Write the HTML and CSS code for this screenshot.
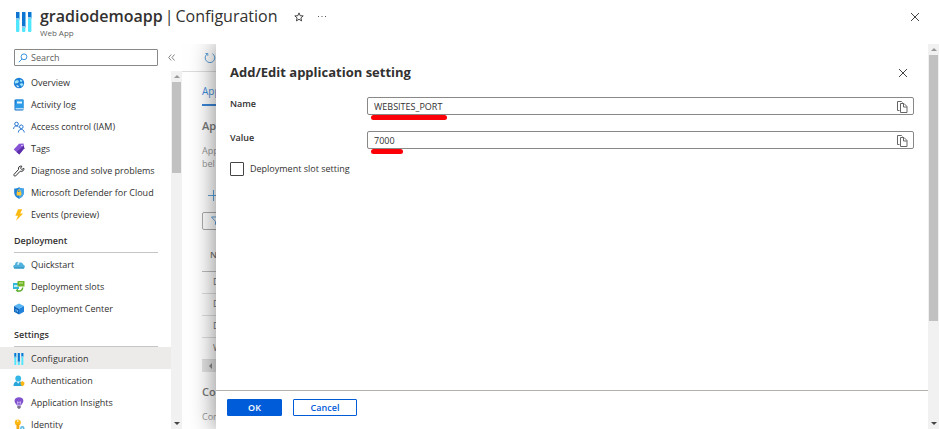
FILE: index.html
```html
<!DOCTYPE html>
<html lang="en">
<head>
<meta charset="utf-8">
<title>gradiodemoapp | Configuration</title>
<link rel="stylesheet" href="styles.css">
</head>
<body>
<svg class="defs" aria-hidden="true">
  <symbol id="bars" viewBox="0 0 16 20">
    <rect x="0" y="0" width="3.400" height="20" rx="1" fill="#50e6ff"/><rect x="6" y="0" width="3.400" height="20" rx="1" fill="#50e6ff"/><rect x="12" y="0" width="3.400" height="20" rx="1" fill="#50e6ff"/>
    <path d="M0 0h3.400v7H0zM6 0h3.400v15H6zM12 0h3.400v6h-3.400z" fill="#0f74d1"/>
    <path d="M0 6h3.400v2H0zM6 14h3.400v2H6zM12 5h3.400v2h-3.400z" fill="#86c9ef"/>
  </symbol>
  <symbol id="close" viewBox="0 0 10 10"><path d="M1 1l8 8M9 1L1 9" fill="none" stroke="#444" stroke-width="1"/></symbol>
  <symbol id="copy" viewBox="0 0 12 12"><path d="M3.500 9.500H1.500V.5h4l1 1M4.500 2.500h3.500l3 3v6H4.500zM7.500 2.500v3.500H11" fill="none" stroke="#666" stroke-width="1"/></symbol>
</svg>

<header class="top">
  <svg class="logo"><use href="#bars"/></svg>
  <div class="heading">
    <h1><b>gradiodemoapp</b> <span>|</span> <span>Configuration</span></h1>
    <p>Web App</p>
  </div>
  <button class="icon-btn star" aria-label="Favorite"><svg width="10" height="10" viewBox="0 0 10 10"><path d="M5 .9l1.200 2.800 3 .2-2.300 2 .7 3L5 7.300 2.400 8.900l.7-3-2.300-2 3-.2z" fill="none" stroke="#444"/></svg></button>
  <button class="icon-btn more" aria-label="More"><svg width="10" height="4" viewBox="0 0 10 4"><path d="M1 1.500h1M4.500 1.500h1M8 1.500h1" stroke="#555"/></svg></button>
  <button class="icon-btn exit" aria-label="Close"><svg width="10" height="10"><use href="#close"/></svg></button>
</header>

<div class="shell">
  <aside class="side">
    <div class="search-row">
      <label class="search"><svg width="10" height="10" viewBox="0 0 10 10"><circle cx="6" cy="3.800" r="2.900" fill="none" stroke="#3b93dc"/><path d="M4 6L.8 9.200" stroke="#3b93dc"/></svg><input type="text" placeholder="Search" aria-label="Search"></label>
      <button class="icon-btn" aria-label="Collapse"><svg width="7" height="7" viewBox="0 0 7 7"><path d="M3.200.5l-2.500 3 2.500 3M6.500.5l-2.500 3 2.500 3" fill="none" stroke="#666" stroke-width=".8"/></svg></button>
    </div>
    <div class="menu-area">
      <nav class="menu">
        <a href="#"><svg viewBox="0 0 12 12"><circle cx="6" cy="6" r="5.200" fill="#1b80d8"/><path d="M1.500 4.500L4 3l2 1-1 2-3 .5zM7 2.500l2.500 1L8.500 5 7 4.500zM6.500 7L9 6l1.500 1.500L8.500 9.500z" fill="#9fe3f7"/><path d="M3 8l3 1-1 1.500z" fill="#fff"/></svg>Overview</a>
        <a href="#"><svg viewBox="0 0 12 12"><rect x="1.500" y=".5" width="9" height="11" rx="1" fill="#1673c9"/><path d="M3 .5h7.500v8.500H2z" fill="#2d9be8"/><path d="M4 2.500h5v2H4z" fill="#e8f6fd"/><path d="M2.500 9h8v1.500h-8z" fill="#b7dcf5"/></svg>Activity log</a>
        <a href="#"><svg viewBox="0 0 12 12" fill="none" stroke="#2877d1"><circle cx="3.500" cy="3" r="1.800"/><path d="M.6 8c.1-3 3-4 5-2"/><circle cx="8.300" cy="5.800" r="1.800"/><path d="M5.300 11.500c.2-4.200 5.700-4.200 6 0"/></svg>Access control (IAM)</a>
        <a href="#"><svg viewBox="0 0 12 12"><path d="M6 .8L10.500.5l.8 4.800-5 6.200L.7 6.600z" fill="#8653d6"/><path d="M6.300 11.500l5-6.200-.5-2.500L3.500 9z" fill="#5b2fa8"/><circle cx="9" cy="2.500" r=".7" fill="#fff"/></svg>Tags</a>
        <a href="#"><svg viewBox="0 0 12 12"><path d="M10.800 3.300L8.900 4.500 7.500 3.300 8.900 1.200C6.500.5 4.900 2.400 5.500 4.500L1 9.400c-.7 1 .7 2.300 1.700 1.500L7.200 6.200C9.500 7 11.500 5.200 10.800 3.300z" fill="none" stroke="#333"/></svg>Diagnose and solve problems</a>
        <a href="#"><svg viewBox="0 0 12 12"><path d="M6 .3c1.500 1 3 1.300 4.800 1.300v4.200c0 3-2.300 4.900-4.800 6C3.500 10.700 1.200 8.800 1.200 5.800V1.600C3 1.600 4.500 1.300 6 .3z" fill="#1f83d8"/><path d="M6 11.800c2.500-1.100 4.800-3 4.800-6V1.600C9 1.600 7.500 1.300 6 .3z" fill="#43a5ec"/><rect x="3.700" y="4.900" width="4.600" height="3.700" rx=".6" fill="#ffca35"/><path d="M4.700 5V3.900c0-1.700 2.600-1.700 2.600 0V5" fill="none" stroke="#ffca35" stroke-width=".9"/></svg>Microsoft Defender for Cloud</a>
        <a href="#"><svg viewBox="0 0 12 12"><path d="M5 .3h4.300L7.200 4.400h3L3 11.800l2-5H2.300z" fill="#fbbb13"/></svg>Events (preview)</a>
        <h2>Deployment</h2>
        <a href="#"><svg viewBox="0 0 12 12"><path d="M2.500 9.500C-.5 9.500-.3 5.800 2 5.700c0-3 3.200-3.800 4.600-1.900C9.300 3 10 5 10 5.600c2.500.4 2.300 3.900 0 3.900z" fill="#4fb1dc"/><path d="M5 2.500L6.500 4.500H5.600v1.500H4.600V4.500z" fill="#fff"/><path d="M1 8.500h10v1H1z" fill="#278bbd"/></svg>Quickstart</a>
        <a href="#"><svg viewBox="0 0 12 12"><rect x="0" y="2" width="6" height="6" fill="#32b6da"/><path d="M1 4h5v2H1z" fill="#b6edf6"/><rect x="4.500" y="0" width="7" height="5.500" fill="#72b626"/><path d="M6 2h4" stroke="#d0eea8"/><path d="M9.800 6.500C9.500 9.500 7 11 4 9.500" fill="none" stroke="#60ad30" stroke-width="1.500"/><path d="M4.800 7.600L2.600 9.500l2.700 1.800z" fill="#60ad30"/></svg>Deployment slots</a>
        <a href="#"><svg viewBox="0 0 12 12"><path d="M6 .5l5 2.500-5 2.800L1 3z" fill="#58b5f3"/><path d="M1 3l5 2.800v5.700L1 8.800z" fill="#1268bd"/><path d="M11 3L6 5.800v5.700l5-2.700z" fill="#2182dc"/><path d="M3 6v2.500M4.500 7v2" stroke="#8fd0fa" stroke-width=".7"/></svg>Deployment Center</a>
        <h2>Settings</h2>
        <a href="#" class="active" aria-current="page"><svg viewBox="0 0 16 20"><use href="#bars" width="16" height="20"/></svg>Configuration</a>
        <a href="#"><svg viewBox="0 0 12 12"><path d="M.5 11c0-3.500 2-4.800 4.700-4.800S10 7.500 10 11z" fill="#28a6d9"/><path d="M3.500 6.200h3.400L5.200 8.800z" fill="#e8f9ff"/><circle cx="5.200" cy="3.400" r="2.900" fill="#32b7e6"/><path d="M9.300 6l2.200 1.500L11.200 10l-2 1.300L7.800 10 7.500 7.500z" fill="#fdb714"/></svg>Authentication</a>
        <a href="#"><svg viewBox="0 0 12 12"><path d="M6 .3c5 0 5.300 4.700 3 6.600L8 8.500H4L3 6.900C.7 5 1 .3 6 .3z" fill="#8253ce"/><path d="M4.300 9h3.400v1.200L6.800 11.700H5.200l-.9-1.500z" fill="#77718a"/><path d="M5 8L4.400 4.800l1.600.7 1.600-.7L7 8" fill="none" stroke="#e2d2ff" stroke-width=".7"/></svg>Application Insights</a>
        <a href="#"><svg viewBox="0 0 12 12"><circle cx="4.800" cy="3.400" r="3" fill="#fdb913"/><path d="M3.500 5h2.800v5.500L5 11.800l-1.500-1.500z" fill="#f6a70c"/><circle cx="4.800" cy="2.100" r=".8" fill="#fff"/><circle cx="9.300" cy="9.300" r="2.200" fill="#58b7df"/><circle cx="9.300" cy="9.300" r=".8" fill="#d8f4ff"/></svg>Identity</a>
      </nav>
      <div class="scroll"><i class="up"></i><i class="thumb side-thumb"></i><i class="down"></i></div>
    </div>
  </aside>

  <main class="stage">
    <section class="blade">
      <div class="toolbar"><svg width="12" height="12" viewBox="0 0 12 12"><path d="M3.500 1.700a4.800 4.800 0 1 0 5 0M1.500 1.500h2.300v2.300" fill="none" stroke="#5fa3dc"/></svg></div>
      <div class="tabs"><span>App</span></div>
      <h3>App</h3>
      <p class="blurb">App<br>bel</p>
      <div class="add"><svg width="11" height="11" viewBox="0 0 11 11"><path d="M5.500 0v11M0 5.500h11" stroke="#5fa3dc"/></svg></div>
      <div class="filter"><svg width="11" height="11" viewBox="0 0 11 11"><path d="M.5 1h10L6.500 5.500V10L4.500 8.500v-3z" fill="none" stroke="#5fa3dc"/></svg></div>
      <table>
        <thead><tr><th>N</th></tr></thead>
        <tbody><tr><td>D</td></tr><tr><td>D</td></tr><tr><td>D</td></tr><tr><td>W</td></tr></tbody>
      </table>
      <div class="hscroll"><i></i></div>
      <h3>Con</h3>
      <p class="blurb">Con</p>
    </section>

    <form class="panel">
      <div class="panel-body">
        <div class="panel-head">
          <h2>Add/Edit application setting</h2>
          <button type="button" class="icon-btn" aria-label="Close panel"><svg width="10" height="10"><use href="#close"/></svg></button>
        </div>
        <div class="field">
          <label for="name">Name</label>
          <div class="box"><input id="name" type="text" value="WEBSITES_PORT"><button type="button" class="icon-btn" aria-label="Copy name"><svg width="12" height="12"><use href="#copy"/></svg></button><i class="mark mark-name"></i></div>
        </div>
        <div class="field">
          <label for="value">Value</label>
          <div class="box"><input id="value" type="text" value="7000"><button type="button" class="icon-btn" aria-label="Copy value"><svg width="12" height="12"><use href="#copy"/></svg></button><i class="mark mark-value"></i></div>
        </div>
        <label class="check"><input type="checkbox">Deployment slot setting</label>
      </div>
      <footer>
        <button type="button" class="btn primary">OK</button>
        <button type="button" class="btn">Cancel</button>
      </footer>
    </form>
  </main>
  <div class="scroll"><i class="up"></i><i class="thumb page-thumb"></i><i class="down"></i></div>
</div>
</body>
</html>
```
FILE: styles.css
```css
* { box-sizing: border-box; }
body {
  margin: 0;
  height: 100vh;
  display: flex;
  flex-direction: column;
  overflow: hidden;
  background: #fff;
  color: #323130;
  font: 9px/12px "Open Sans", "Noto Sans", sans-serif;
}
h1, h2, h3, p { margin: 0; }
svg { display: block; flex: none; }
i { display: block; }
button, input { font: inherit; color: inherit; }
.defs { position: absolute; width: 0; height: 0; }
.icon-btn { padding: 0; border: 0; background: none; display: flex; flex: none; }

.top {
  height: 44px;
  flex: none;
  display: flex;
  align-items: flex-start;
  padding: 6px 19px 0 16px;
}
.logo { width: 16px; height: 20px; margin: 6px 8px 0 0; }
.heading h1 { display: flex; gap: 2px; font-size: 16px; line-height: 21px; font-weight: 400; }
.heading b { font-weight: 600; }
.heading p { font-size: 8px; color: #605e5c; }
.star { margin: 6px 0 0 16px; }
.more { margin: 9px 0 0 13px; }
.exit { margin: 6px 0 0 auto; }

.shell { flex: 1; min-height: 0; display: flex; }
.side { width: 182px; flex: none; display: flex; flex-direction: column; }
.search-row { height: 27px; flex: none; display: flex; align-items: center; gap: 10px; padding-left: 14px; }
.search {
  width: 144px;
  height: 17px;
  display: flex;
  align-items: center;
  gap: 3px;
  padding-left: 3px;
  border: 1px solid #8a8886;
  border-radius: 1px;
}
.search input { flex: 1; min-width: 0; padding: 0; border: 0; outline: 0; background: none; }
.search input::placeholder { color: #605e5c; opacity: 1; }
.menu-area { flex: 1; min-height: 0; display: flex; }
.menu { flex: 1; overflow: hidden; }
.menu a {
  height: 22px;
  display: flex;
  align-items: center;
  gap: 6px;
  padding: 2px 0 0 13px;
  color: inherit;
  text-decoration: none;
  white-space: nowrap;
}
.menu a svg { width: 12px; height: 12px; }
.menu a.active { background: #edebe9; }
.menu h2 {
  height: 28px;
  margin: 0 13px 0 14px;
  padding-top: 10px;
  border-bottom: 1px solid #c8c6c4;
  font-size: 9px;
  line-height: 12px;
  font-weight: 600;
}

.scroll { width: 11px; flex: none; display: flex; flex-direction: column; align-items: center; background: #f1f1f1; }
.up, .down { border: 3px solid transparent; }
.up { margin: 1px 0 4px; border-bottom-color: #999; }
.down { margin: auto 0 1px; border-top-color: #444; }
.thumb { width: 9px; background: #c1c1c1; }
.side-thumb { height: 91px; }
.page-thumb { height: 69%; }

.stage { flex: 1; min-width: 0; position: relative; overflow: hidden; }
.blade { color: #777; }
.blade > * { margin-left: 20px; }
.blade .toolbar { height: 28px; margin-left: 0; padding: 8px 0 0 22px; border-bottom: 1px solid #ddd; }
.tabs { display: flex; padding-top: 13px; color: #3f8edb; }
.tabs span { width: 100px; height: 21px; border-bottom: 2px solid #3b86d6; font-size: 10px; }
.blade h3 { padding-top: 12px; font-size: 11px; line-height: 16px; font-weight: 600; }
.blade .blurb { padding-top: 10px; line-height: 13px; color: #999; }
.add { padding: 20px 0 0 6px; }
.filter { height: 18px; margin-top: 11px; padding: 3px 0 0 8px; border: 1px solid #aaa; border-radius: 2px; }
.blade table { width: calc(100% - 20px); margin-top: 15px; border-spacing: 0; border-collapse: collapse; }
th, td { height: 22px; padding: 0 0 0 11px; text-align: left; border-bottom: 1px solid #ddd; }
th { height: 26px; padding: 0 0 6px 8px; font-weight: 600; border-color: #bbb; }
.hscroll { height: 12px; padding: 3px 4px; background: #e3e3e3; }
.hscroll i { width: 6px; height: 6px; border: 3px solid transparent; border-right-color: #888; border-left: 0; }

.panel {
  position: absolute;
  inset: 0 0 0 34px;
  display: flex;
  flex-direction: column;
  background: #fff;
  box-shadow: 0 0 24px rgba(0, 0, 0, .5);
}
.panel-body { flex: 1; padding: 20px 14px 0; }
.panel-head { display: flex; align-items: center; justify-content: space-between; height: 17px; padding-right: 6px; }
.panel-head h2 { font-size: 13px; line-height: 17px; font-weight: 700; }
.field { display: flex; height: 18px; margin-top: 16px; }
.field label { width: 137px; flex: none; padding-top: 1px; font-weight: 600; }
.box {
  position: relative;
  flex: 1;
  min-width: 0;
  display: flex;
  align-items: center;
  padding: 1px 5px 0 6px;
  border: 1px solid #8a8886;
  border-radius: 2px;
}
.box input { flex: 1; min-width: 0; padding: 0; border: 0; outline: 0; background: none; }
.mark { position: absolute; top: 17px; left: 3px; height: 5px; border-radius: 3px; background: #fb0007; }
.mark-name { width: 76px; }
.mark-value { width: 32px; }
.check { display: flex; align-items: center; gap: 6px; margin-top: 13px; }
.check input { appearance: none; width: 14px; height: 14px; margin: 0; border: 1px solid #444; border-radius: 1px; background: #fff; }
footer { height: 39px; display: flex; gap: 11px; padding: 8px 11px; border-top: 1px solid #b3b0ad; }
.btn {
  width: 64px;
  height: 17px;
  padding: 0;
  border: 1px solid #015cda;
  border-radius: 1px;
  background: #fff;
  color: #015cda;
  font-weight: 600;
  line-height: 12px;
}
.primary { width: 55px; background: #015cda; color: #fff; }
```
